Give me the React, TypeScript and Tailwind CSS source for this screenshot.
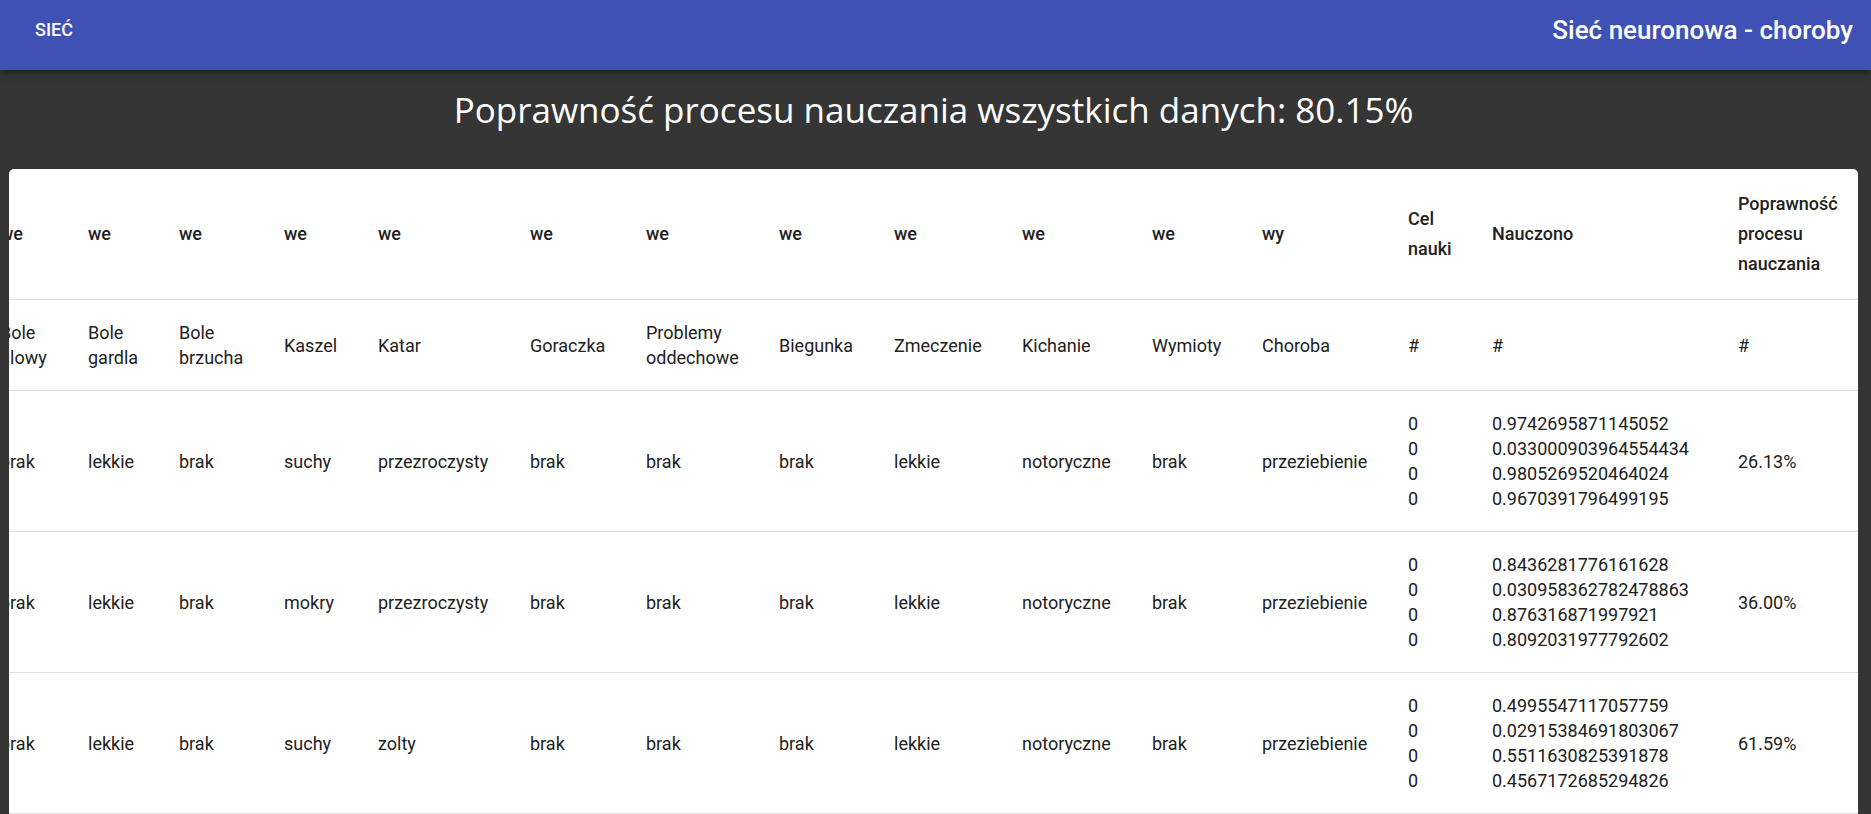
import { useLayoutEffect, useRef } from "react";

const columns = [
  { width: "w-[88px]", kind: "we", name: "Bole glowy" },
  { width: "w-[91px]", kind: "we", name: "Bole gardla" },
  { width: "w-[105px]", kind: "we", name: "Bole brzucha" },
  { width: "w-[94px]", kind: "we", name: "Kaszel" },
  { width: "w-[152px]", kind: "we", name: "Katar" },
  { width: "w-[116px]", kind: "we", name: "Goraczka" },
  { width: "w-[133px]", kind: "we", name: "Problemy oddechowe" },
  { width: "w-[115px]", kind: "we", name: "Biegunka" },
  { width: "w-[128px]", kind: "we", name: "Zmeczenie" },
  { width: "w-[130px]", kind: "we", name: "Kichanie" },
  { width: "w-[110px]", kind: "we", name: "Wymioty" },
  { width: "w-[146px]", kind: "wy", name: "Choroba" },
  { width: "w-[84px]", kind: "Cel nauki", name: "#" },
  { width: "w-[246px]", kind: "Nauczono", name: "#" },
  { width: "w-[140px]", kind: "Poprawność procesu nauczania", name: "#" },
];

const records = [
  {
    values: ["brak", "lekkie", "brak", "suchy", "przezroczysty", "brak", "brak", "brak", "lekkie", "notoryczne", "brak", "przeziebienie"],
    target: ["0", "0", "0", "0"],
    learned: ["0.9742695871145052", "0.033000903964554434", "0.9805269520464024", "0.9670391796499195"],
    accuracy: "26.13%",
  },
  {
    values: ["brak", "lekkie", "brak", "mokry", "przezroczysty", "brak", "brak", "brak", "lekkie", "notoryczne", "brak", "przeziebienie"],
    target: ["0", "0", "0", "0"],
    learned: ["0.8436281776161628", "0.030958362782478863", "0.876316871997921", "0.8092031977792602"],
    accuracy: "36.00%",
  },
  {
    values: ["brak", "lekkie", "brak", "suchy", "zolty", "brak", "brak", "brak", "lekkie", "notoryczne", "brak", "przeziebienie"],
    target: ["0", "0", "0", "0"],
    learned: ["0.4995547117057759", "0.02915384691803067", "0.5511630825391878", "0.4567172685294826"],
    accuracy: "61.59%",
  },
];

const cell = "border-b border-[#e0e0e0] p-5 text-left align-middle";

function Lines({ items }: { items: string[] }) {
  return (
    <>
      {items.map((item, i) => (
        <div key={i}>{item}</div>
      ))}
    </>
  );
}

export default function App() {
  const scroller = useRef<HTMLDivElement>(null);

  useLayoutEffect(() => {
    const el = scroller.current;
    if (el) el.scrollLeft = el.scrollWidth;
  }, []);

  return (
    <div className="min-h-screen bg-[#353535] font-[Roboto,sans-serif] text-[#212121]">
      <header className="relative flex h-[70px] items-start justify-between bg-[#3f51b5] pr-[18px] pl-[25px] text-white shadow-[0_2px_5px_rgba(0,0,0,0.2),0_5px_6px_rgba(0,0,0,0.14),0_1px_12px_rgba(0,0,0,0.12)]">
        <button type="button" className="px-2.5 py-[15px] text-[18px] leading-[30px] font-medium">
          SIEĆ
        </button>
        <h2 className="py-[15px] text-[26px] leading-[30px] font-medium">Sieć neuronowa - choroby</h2>
      </header>

      <main className="pr-[13px] pl-[9px]">
        <h1 className="pt-[13px] pb-[32px] text-center font-['Open_Sans',sans-serif] text-[35px] leading-[54px] text-white">
          Poprawność procesu nauczania wszystkich danych: 80.15%
        </h1>

        <div ref={scroller} className="overflow-x-auto rounded-t-[5px] bg-white [scrollbar-width:none]">
          <table className="w-full min-w-[1878px] table-fixed border-separate border-spacing-0 text-[18px] leading-[25px]">
            <colgroup>
              {columns.map((c, i) => (
                <col key={i} className={c.width} />
              ))}
            </colgroup>
            <thead>
              <tr>
                {columns.map((c, i) => (
                  <th key={i} scope="col" className={`${cell} leading-[30px] font-medium`}>
                    {c.kind}
                  </th>
                ))}
              </tr>
            </thead>
            <tbody>
              <tr>
                {columns.map((c, i) => (
                  <td key={i} className={cell}>
                    {c.name}
                  </td>
                ))}
              </tr>
              {records.map((r, i) => (
                <tr key={i}>
                  {r.values.map((v, j) => (
                    <td key={j} className={cell}>
                      {v}
                    </td>
                  ))}
                  <td className={cell}>
                    <Lines items={r.target} />
                  </td>
                  <td className={cell}>
                    <Lines items={r.learned} />
                  </td>
                  <td className={cell}>{r.accuracy}</td>
                </tr>
              ))}
            </tbody>
          </table>
        </div>
      </main>
    </div>
  );
}
